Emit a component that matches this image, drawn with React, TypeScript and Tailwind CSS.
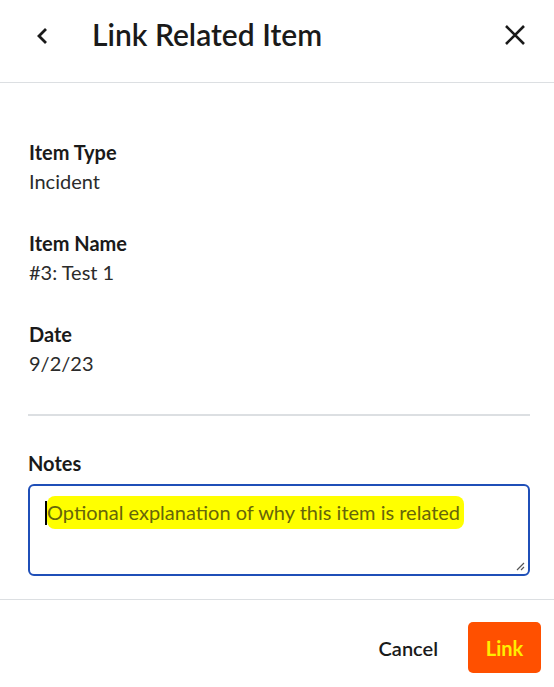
import React from 'react';

function Field({ label, value }: { label: string; value: string }) {
  return (
    <div className="flex flex-col">
      <span className="text-[20px] font-bold leading-[29px] text-[#1a1a1a]">{label}</span>
      <span className="text-[20px] leading-[29px] text-[#2b2b2b]">{value}</span>
    </div>
  );
}

export default function App() {
  return (
    <div
      className="flex h-[687px] w-[554px] flex-col bg-white"
      style={{ fontFamily: 'Lato, "Open Sans", sans-serif' }}
    >
      <div className="flex h-[83px] shrink-0 items-center border-b border-[#dcdfe2] pb-[14px] pl-[35px] pr-[28px]">
        <svg width="16" height="18" viewBox="0 0 16 18" className="mr-[41px] mt-[4px]">
          <path d="M11 2 L4 9 L11 16" fill="none" stroke="#1a1a1a" strokeWidth="2.8" />
        </svg>
        <h1 className="flex-1 text-[30px] font-semibold leading-none text-[#1a1a1a]">
          Link Related Item
        </h1>
        <svg width="22" height="22" viewBox="0 0 22 22" className="mt-[2px]">
          <path d="M2 2 L20 20 M20 2 L2 20" fill="none" stroke="#1a1a1a" strokeWidth="2.6" />
        </svg>
      </div>

      <div className="flex flex-col gap-[33px] px-[29px] pt-[55px]">
        <Field label="Item Type" value="Incident" />
        <Field label="Item Name" value="#3: Test 1" />
        <Field label="Date" value="9/2/23" />
      </div>

      <div className="ml-[28px] mr-[24px] mt-[36px] border-t-2 border-[#dcdfe2]" />

      <div className="flex flex-col pl-[28px] pr-[24px] pt-[33px]">
        <span className="mb-[6px] text-[20px] font-bold leading-[29px] text-[#1a1a1a]">Notes</span>
        <div className="relative h-[92px] rounded-[6px] border-2 border-[#1f4fb8] pl-[15px] pt-[10px]">
          <div className="flex items-center">
            <span className="h-[24px] w-[2px] bg-black" />
            <span className="rounded-[8px] bg-[#ffff00] pb-[3px] pt-[2px] pr-[4px] text-[20px] leading-[28px] text-[#66660a]">
              Optional explanation of why this item is related
            </span>
          </div>
          <svg width="10" height="10" viewBox="0 0 10 10" className="absolute bottom-[3px] right-[3px]">
            <path d="M9 2 L2 9 M9 6 L6 9" stroke="#555" strokeWidth="1.2" />
          </svg>
        </div>
      </div>

      <div className="mt-[23px] flex flex-1 items-start justify-end gap-[30px] border-t border-[#dcdfe2] pr-[13px] pt-[22px]">
        <button className="h-[51px] text-[20px] font-semibold text-[#1a1a1a]">Cancel</button>
        <button className="h-[51px] w-[73px] rounded-[5px] bg-[#ff5000] text-[20px] font-bold text-[#ffee00]">
          Link
        </button>
      </div>
    </div>
  );
}
